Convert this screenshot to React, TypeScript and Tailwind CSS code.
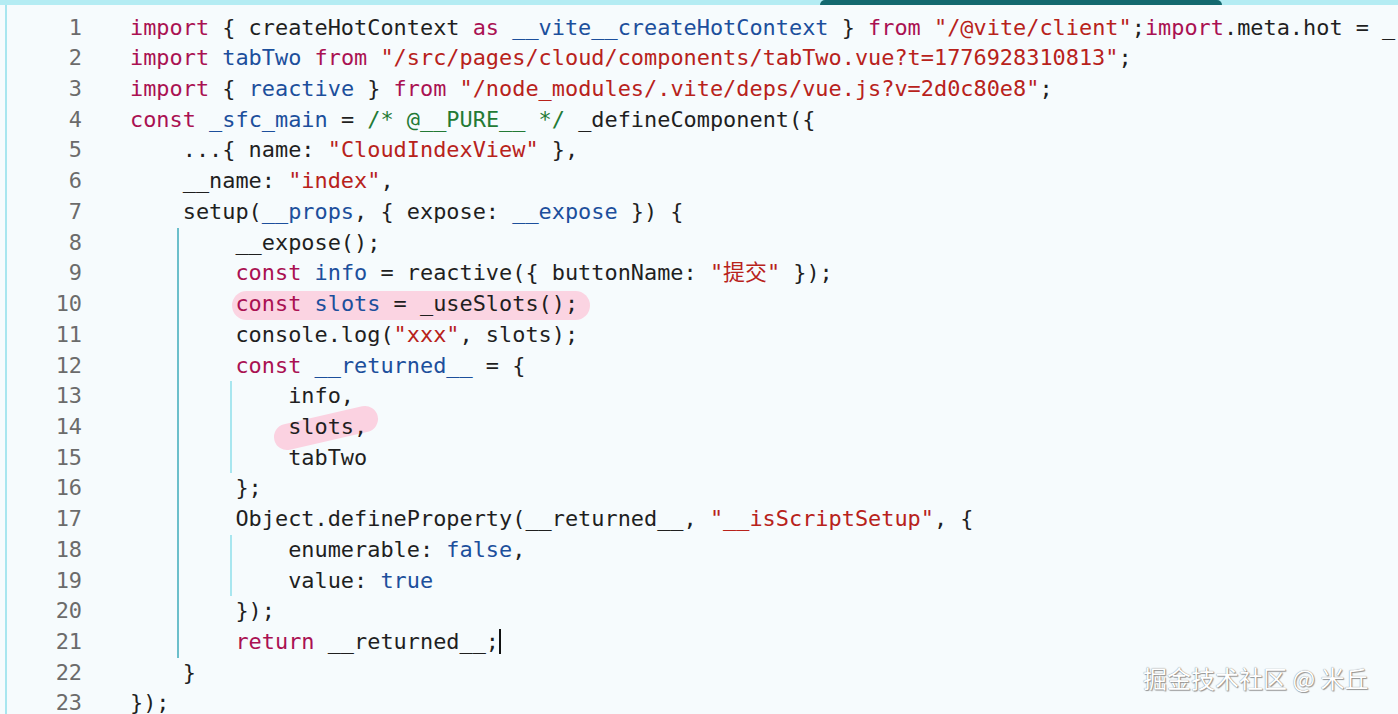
import React from "react";

type Kind = "t" | "kw" | "def" | "str" | "cm";
type Tok = [string, Kind?];
type Line = { indent: number; toks: Tok[] };

const colors: Record<Kind, string> = {
  t: "text-[#1f1f1f]",
  kw: "text-[#aa1152]",
  def: "text-[#1c4f9c]",
  str: "text-[#b8221b]",
  cm: "text-[#237a35]",
};

const lines: Line[] = [
  {
    indent: 0,
    toks: [
      ["import", "kw"],
      [" { createHotContext "],
      ["as", "kw"],
      [" "],
      ["__vite__createHotContext", "def"],
      [" } "],
      ["from", "kw"],
      [" "],
      ['"/@vite/client"', "str"],
      [";"],
      ["import", "kw"],
      [".meta.hot = _"],
    ],
  },
  {
    indent: 0,
    toks: [
      ["import", "kw"],
      [" "],
      ["tabTwo", "def"],
      [" "],
      ["from", "kw"],
      [" "],
      ['"/src/pages/cloud/components/tabTwo.vue?t=1776928310813"', "str"],
      [";"],
    ],
  },
  {
    indent: 0,
    toks: [
      ["import", "kw"],
      [" { "],
      ["reactive", "def"],
      [" } "],
      ["from", "kw"],
      [" "],
      ['"/node_modules/.vite/deps/vue.js?v=2d0c80e8"', "str"],
      [";"],
    ],
  },
  {
    indent: 0,
    toks: [
      ["const", "kw"],
      [" "],
      ["_sfc_main", "def"],
      [" = "],
      ["/* @__PURE__ */", "cm"],
      [" _defineComponent({"],
    ],
  },
  { indent: 4, toks: [["...{ name: "], ['"CloudIndexView"', "str"], [" },"]] },
  { indent: 4, toks: [["__name: "], ['"index"', "str"], [","]] },
  {
    indent: 4,
    toks: [
      ["setup("],
      ["__props", "def"],
      [", { expose: "],
      ["__expose", "def"],
      [" }) {"],
    ],
  },
  { indent: 8, toks: [["__expose();"]] },
  {
    indent: 8,
    toks: [
      ["const", "kw"],
      [" "],
      ["info", "def"],
      [" = reactive({ buttonName: "],
      ['"提交"', "str"],
      [" });"],
    ],
  },
  {
    indent: 8,
    toks: [["const", "kw"], [" "], ["slots", "def"], [" = _useSlots();"]],
  },
  { indent: 8, toks: [["console.log("], ['"xxx"', "str"], [", slots);"]] },
  {
    indent: 8,
    toks: [["const", "kw"], [" "], ["__returned__", "def"], [" = {"]],
  },
  { indent: 12, toks: [["info,"]] },
  { indent: 12, toks: [["slots,"]] },
  { indent: 12, toks: [["tabTwo"]] },
  { indent: 8, toks: [["};"]] },
  {
    indent: 8,
    toks: [
      ["Object.defineProperty(__returned__, "],
      ['"__isScriptSetup"', "str"],
      [", {"],
    ],
  },
  { indent: 12, toks: [["enumerable: "], ["false", "def"], [","]] },
  { indent: 12, toks: [["value: "], ["true", "def"]] },
  { indent: 8, toks: [["});"]] },
  { indent: 8, toks: [["return", "kw"], [" __returned__;"]] },
  { indent: 4, toks: [["}"]] },
  { indent: 0, toks: [["});"]] },
];

const guideLeft = ["left-[-6px]", "left-[47px]", "left-[100px]"];

function CodeLine({ line, n }: { line: Line; n: number }) {
  const levels = Math.floor(line.indent / 4);
  return (
    <div className="relative h-[30.73px] whitespace-pre">
      {Array.from({ length: levels }).map((_, k) => (
        <span
          key={k}
          className={`absolute top-0 bottom-0 w-[2px] ${guideLeft[k]} ${
            k === 1 ? "bg-[#6cbfcb]" : "bg-[#a8e6ef]"
          }`}
        />
      ))}
      {n === 10 && (
        <span className="absolute left-[102px] top-[2px] h-[29px] w-[358px] rounded-full bg-[#fbd4e2]" />
      )}
      {n === 14 && (
        // marker stroke around "slots,"
        <svg
          className="absolute left-[130px] top-[-10px]"
          width="130"
          height="60"
          viewBox="0 0 130 60"
        >
          <line
            x1="27"
            y1="35"
            x2="105"
            y2="17"
            stroke="#fbd2e1"
            strokeWidth="26"
            strokeLinecap="round"
          />
        </svg>
      )}
      <span className="relative">
        {" ".repeat(line.indent)}
        {line.toks.map(([text, kind], i) => (
          <span key={i} className={colors[kind ?? "t"]}>
            {text}
          </span>
        ))}
        {n === 21 && (
          <span className="inline-block h-[25px] w-[1.5px] bg-[#111] align-[-5px]" />
        )}
      </span>
    </div>
  );
}

export default function App() {
  return (
    <div className="relative w-[1398px] h-[714px] overflow-hidden bg-[#f6fbfd] font-['DejaVu_Sans_Mono','Noto_Sans_CJK_SC',monospace] text-[21.9px] leading-[30.73px]">
      <div className="flex h-[5px] items-end bg-[#b4ecf3]">
        <div className="ml-[820px] h-[5px] w-[402px] rounded-t-[5px] bg-[#14696f]" />
      </div>
      <div className="ml-[5px] flex border-l-2 border-[#a8e6ef] pt-[7.6px] h-[709px]">
        <div className="w-[75px] shrink-0 text-right text-[#6b6b6b]">
          {lines.map((_, i) => (
            <div key={i} className="h-[30.73px]">
              {i + 1}
            </div>
          ))}
        </div>
        <div className="ml-[48px] min-w-0 flex-1 overflow-hidden">
          {lines.map((l, i) => (
            <CodeLine key={i} line={l} n={i + 1} />
          ))}
        </div>
      </div>
      <div className="absolute left-[1143px] top-[662px] font-['Noto_Sans_CJK_SC',sans-serif] text-[24px] leading-[32px] text-white [text-shadow:0_0_1px_#666,1px_1px_1px_#999]">
        掘金技术社区 @ 米丘
      </div>
    </div>
  );
}
